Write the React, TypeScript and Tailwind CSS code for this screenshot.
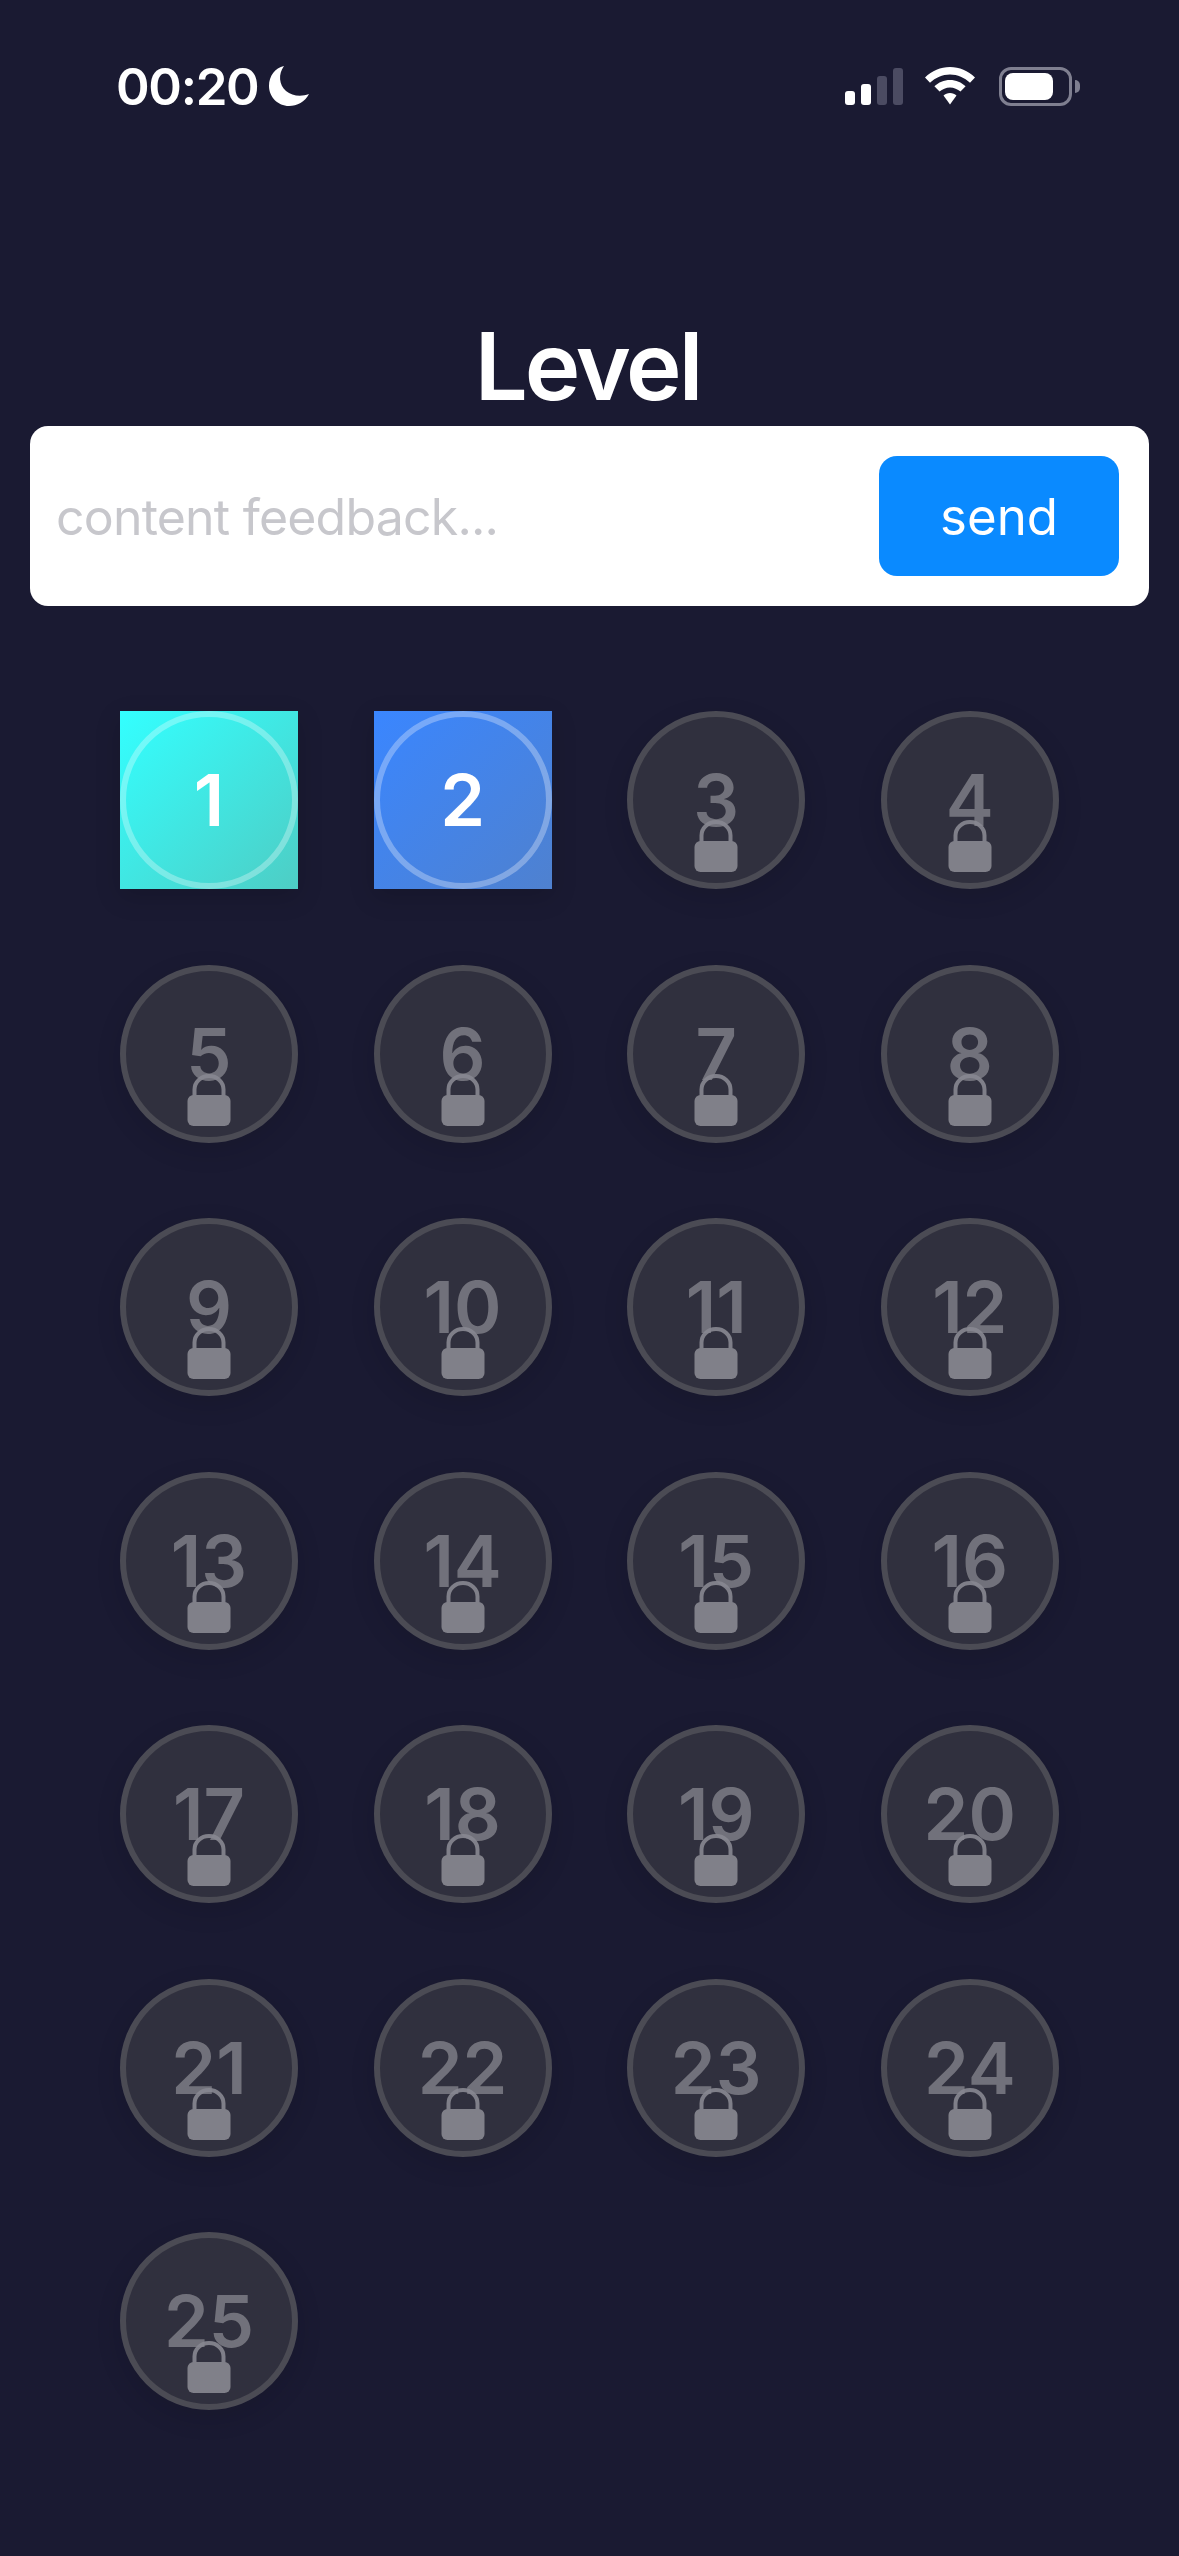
const levels = Array.from({ length: 25 }, (_, i) => i + 1);

function Lock() {
  return (
    <svg className="absolute left-1/2 -translate-x-1/2 bottom-[11px]" width="44" height="52" viewBox="0 0 44 52">
      <path d="M7.5 24 V15.5 a14.5 13.5 0 0 1 29 0 V24" fill="none" stroke="#d0d0d0" strokeOpacity="0.9" strokeWidth="4" />
      <rect x="0.5" y="21" width="43" height="31" rx="6" fill="#c4c4c4" />
    </svg>
  );
}

function Tile({ n }: { n: number }) {
  if (n === 1 || n === 2) {
    return (
      <div
        className={
          "w-[178px] h-[178px] shadow-[0_8px_24px_rgba(0,0,0,0.15)] " +
          (n === 1
            ? "bg-[linear-gradient(135deg,#33ffff,#4ecdc4)]"
            : "bg-[linear-gradient(135deg,#3a86ff,#4f81cf)]")
        }
      >
        <div className="w-full h-full rounded-full border-[6px] border-white/30 flex items-center justify-center text-white text-[72px] font-semibold leading-none">
          {n}
        </div>
      </div>
    );
  }
  return (
    <div className="relative w-[178px] h-[178px] rounded-full bg-[#404046] border-[6px] border-[#6c6c6c] opacity-60 flex items-center justify-center text-[#acacac] text-[72px] font-semibold leading-none shadow-[0_8px_24px_rgba(0,0,0,0.15)]">
      {n}
      <Lock />
    </div>
  );
}

export default function App() {
  return (
    <div className="w-[1179px] h-[2556px] bg-[#1a1a32] text-white font-['Inter','Liberation_Sans',sans-serif] overflow-hidden">
      <div className="h-[309px] pl-[116px] pr-[99px] pt-[56px] flex items-start justify-between">
        <div className="flex items-center gap-[10px] h-[60px]">
          <span className="text-[51px] font-semibold leading-none tracking-[-1.3px]">00:20</span>
          <svg width="42" height="42" viewBox="0 0 42 42">
            <path d="M16 1 C10 9 11 20 18 26 C24 31 33 32 41 29 C37 37 29 41 21 41 C10 41 1 32 1 21 C1 11 7 3 16 1 Z" fill="#fff" />
          </svg>
        </div>
        <div className="flex items-center gap-[22px] h-[60px]">
          <div className="flex items-end gap-[6px] h-[37px]">
            <div className="w-[10px] h-[14px] rounded-[3px] bg-white" />
            <div className="w-[10px] h-[21px] rounded-[3px] bg-white" />
            <div className="w-[10px] h-[29px] rounded-[3px] bg-[#4b4b62]" />
            <div className="w-[10px] h-[37px] rounded-[3px] bg-[#4b4b62]" />
          </div>
          <svg width="50" height="38" viewBox="0 0 50 38">
            <path d="M25 0 C34.5 0 43 3.8 50 10.5 L45 15.8 C39.5 10.5 32.6 7.4 25 7.4 C17.4 7.4 10.5 10.5 5 15.8 L0 10.5 C7 3.8 15.5 0 25 0 Z" fill="#fff" />
            <path d="M25 13 C31 13 36.4 15.4 40.6 19.3 L35.5 24.6 C32.6 22 29 20.4 25 20.4 C21 20.4 17.4 22 14.5 24.6 L9.4 19.3 C13.6 15.4 19 13 25 13 Z" fill="#fff" />
            <path d="M25 26 C27.6 26 29.8 27 31.5 28.6 L25 37.5 L18.5 28.6 C20.2 27 22.4 26 25 26 Z" fill="#fff" />
          </svg>
          <div className="flex items-center gap-[3px] ml-[2px]">
            <div className="w-[73px] h-[39px] rounded-[12px] border-[3px] border-[#7f7f90] p-[3px] flex">
              <div className="w-[48px] h-full rounded-[8px] bg-white" />
            </div>
            <div className="w-[5px] h-[13px] rounded-r-full bg-[#7f7f90]" />
          </div>
        </div>
      </div>

      <h1 className="h-[117px] pr-[4px] text-center text-[94px] font-semibold leading-[115px] tracking-[-3px]">Level</h1>

      <div className="px-[30px]">
        <div className="h-[180px] bg-white rounded-[18px] pl-[26px] pr-[30px] flex items-center justify-between">
          <span className="text-[#c7c7cc] text-[50px] leading-none tracking-[-0.8px] pt-[2px]">content feedback...</span>
          <button className="w-[240px] h-[120px] rounded-[18px] bg-[#0a8aff] text-white text-[51px] leading-none flex items-center justify-center">
            send
          </button>
        </div>
      </div>

      <div className="mt-[105px] pl-[120px] grid grid-cols-[repeat(4,178px)] gap-x-[75.6px] gap-y-[75.5px]">
        {levels.map((n) => (
          <Tile key={n} n={n} />
        ))}
      </div>
    </div>
  );
}
